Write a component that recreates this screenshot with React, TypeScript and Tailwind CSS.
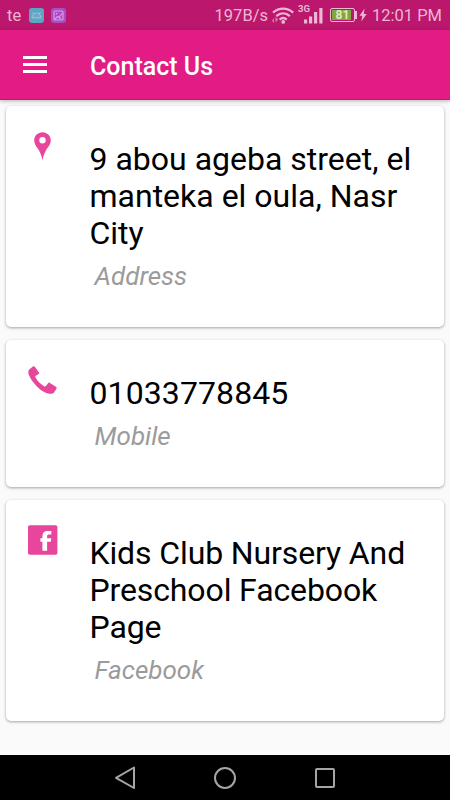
import type { ReactNode } from "react";

type Contact = {
  label: string;
  value: string;
  icon: ReactNode;
  height: string;
  tracking?: string;
};

const PinIcon = () => (
  <svg width="30" height="30" viewBox="0 0 30 30" className="text-[#e8469d]">
    <path
      fill="currentColor"
      fillRule="evenodd"
      d="M14.500 1.200c-4.700 0-8.300 3.600-8.300 8.200 0 3.400 2 5.700 3.800 8.400 2.100 3.200 3.500 6.700 4.500 11.400 1-4.700 2.300-8.200 4.400-11.400 1.800-2.700 3.900-5 3.900-8.400 0-4.600-3.700-8.200-8.300-8.200zm0 4.900a3.200 3.200 0 1 1 0 6.400 3.200 3.200 0 0 1 0-6.400z"
    />
  </svg>
);

const PhoneIcon = () => (
  <svg width="30" height="30" viewBox="0 0 30 30" className="text-[#e8469d]">
    <path
      fill="currentColor"
      d="M1.500 4.200 4.600 1.700c.9-.7 1.800-.6 2.400.3l3.800 5.200c.5.700.4 1.300-.2 1.800L7.700 10.800c-.5.400-.6.900-.3 1.500 1.900 3.600 5.400 7.100 9 9.100.6.300 1.100.2 1.500-.3l2.200-2.900c.5-.700 1.100-.8 1.800-.3l5.900 3.900c.9.600 1.100 1.400.5 2.300l-2.300 3.300c-.8 1.200-2.200 1.600-4.200 1.400-4.500-.5-9.400-3.800-13.300-7.900C4.400 16.600 1 11.700.4 8 .1 6.400.5 5.100 1.500 4.200z"
    />
  </svg>
);

const FacebookIcon = () => (
  <svg width="30" height="30" viewBox="0 0 30 30">
    <rect y=".2" width="29.400" height="29.600" rx="1.800" fill="#e8469d" />
    <path
      fill="#fff"
      d="M14.400 25.800V16.700h-2v-3.500h2v-2c0-3.400 1.800-5.300 5.200-5.300h3.700v3.700h-2.300c-1.400 0-1.900.6-1.900 1.800v1.800h4.200l-.5 3.500h-3.700v9.100z"
    />
  </svg>
);

const CONTACTS: Contact[] = [
  {
    label: "Address",
    value: "9 abou ageba street, el manteka el oula, Nasr City",
    icon: <PinIcon />,
    height: "h-[221px]",
  },
  {
    label: "Mobile",
    value: "01033778845",
    icon: <PhoneIcon />,
    height: "h-[147px]",
    tracking: "tracking-[0.1px]",
  },
  {
    label: "Facebook",
    value: "Kids Club Nursery And Preschool Facebook Page",
    icon: <FacebookIcon />,
    height: "h-[221px]",
    tracking: "tracking-[-0.12px]",
  },
];

const StatusBar = () => (
  <div className="h-[30px] shrink-0 flex items-center bg-[#bb176d] pl-[7px] pr-2 text-[#eeb6d5] text-[16.500px] leading-none">
    <span className="mt-[2px]">te</span>
    <svg width="15" height="15" viewBox="0 0 15 15" className="ml-[8px]">
      <rect width="15" height="15" rx="3" fill="#5da5c3" />
      <path
        d="M3 9.800c.2-3.200 2-4.600 4.500-4.600s4.300 1.400 4.500 4.600zM4.600 5.800 3.600 4M10.400 5.800l1-1.800"
        fill="none"
        stroke="#a9c4dc"
        strokeWidth="1"
      />
      <circle cx="5.700" cy="7.900" r=".6" fill="#a9c4dc" />
      <circle cx="9.300" cy="7.900" r=".6" fill="#a9c4dc" />
    </svg>
    <svg width="15" height="15" viewBox="0 0 15 15" className="ml-[7px]">
      <rect width="15" height="15" rx="3" fill="#ab4bc6" />
      <g fill="none" stroke="#d9a0de" strokeWidth="1.100">
        <rect x="3" y="3" width="9" height="9" rx="1" />
        <path d="m3.500 11.500 3-3 1.500 1 3.500-4.500M8 9.500l2 1.500" />
      </g>
      <circle cx="5.600" cy="5.600" r=".9" fill="#d9a0de" />
    </svg>

    <span className="ml-auto mt-[2px]">197B/s</span>
    <svg width="22" height="17" viewBox="0 0 22 17" className="ml-[4px]">
      <g fill="none" stroke="currentColor" strokeWidth="2.200">
        <path d="M1 5.600c6-5.300 14.200-5.300 20.200 0" />
        <path d="M4.300 9.200c4.200-3.700 9.400-3.700 13.600 0" />
        <path d="M7.600 12.600c2.300-2.100 4.800-2.100 7.100 0" />
      </g>
      <circle cx="11.200" cy="14.900" r="1.900" fill="currentColor" />
      <path d="M0 13.800 2 11v5zM3.500 9.500v6l2.700-3z" fill="currentColor" opacity=".6" />
    </svg>
    <div className="relative ml-[4px] h-[17px] w-[25px]">
      <span className="absolute left-0 -top-[3px] text-[9.500px] font-bold leading-[10px]">3G</span>
      <svg width="25" height="17" viewBox="0 0 25 17" fill="currentColor">
        <rect x="6" y="12.500" width="3.200" height="4" />
        <rect x="11" y="9.500" width="3.200" height="7" />
        <rect x="16" y="5" width="3.200" height="11.500" />
        <rect x="21.300" y="1" width="3.200" height="15.500" />
      </svg>
    </div>
    <div className="ml-[7px] flex items-center">
      <div className="h-[14px] w-[25px] rounded-[2px] border-[1.500px] border-[#eeb6d5] p-px flex">
        <span className="w-[19px] bg-[#7fa83a] text-center text-[12px] font-bold leading-[11px] text-[#e9e3c9] pl-[2px]">
          81
        </span>
      </div>
      <span className="h-[8px] w-[2px] bg-[#eeb6d5]" />
    </div>
    <svg width="8" height="14" viewBox="0 0 8 14" className="ml-[2px]">
      <path d="M5.500.5.600 7.800h2.700L2.300 13.500l5.400-7.600H4.800z" fill="currentColor" />
    </svg>
    <span className="ml-[5px] mt-[2px]">12:01 PM</span>
  </div>
);

const AppBar = () => (
  <header className="relative z-10 h-[70px] shrink-0 flex items-center bg-[#e21b85] border-b border-[#c71573] pl-[23px] shadow-[0_1px_4px_rgba(0,0,0,0.3)]">
    <button type="button" aria-label="Menu" className="flex w-6 flex-col gap-[4px] -mt-px">
      <span className="h-[3px] bg-white" />
      <span className="h-[3px] bg-white" />
      <span className="h-[3px] bg-white" />
    </button>
    <h1 className="ml-[43px] text-[25px] font-medium leading-none text-white mt-[3px]">Contact Us</h1>
  </header>
);

const ContactCard = ({ label, value, icon, height, tracking = "" }: Contact) => (
  <section
    className={`${height} flex rounded-[5px] bg-white shadow-[0_1px_3px_rgba(0,0,0,0.35)]`}
  >
    <div className="w-[83.500px] shrink-0 pl-[22px] pt-[25px]">{icon}</div>
    <div className="w-[335px] pt-[35px]">
      <p className={`text-[32px] leading-[37px] text-black ${tracking}`}>{value}</p>
      <p className="mt-[9px] pl-[5px] text-[26px] italic leading-[30px] text-[#9b9b9b]">{label}</p>
    </div>
  </section>
);

const NavBar = () => (
  <nav className="h-[45px] shrink-0 flex items-center justify-center gap-[76px] bg-black">
    <svg width="24" height="24" viewBox="0 0 24 24" fill="none" stroke="#a5a5a5" strokeWidth="2">
      <path d="M21 1.500v20.500L3 11.800z" strokeLinejoin="round" />
    </svg>
    <svg width="24" height="24" viewBox="0 0 24 24" fill="none" stroke="#a5a5a5" strokeWidth="2">
      <circle cx="12" cy="12" r="10" />
    </svg>
    <svg width="24" height="24" viewBox="0 0 24 24" fill="none" stroke="#a5a5a5" strokeWidth="2">
      <rect x="3" y="3" width="18" height="18" rx="1" />
    </svg>
  </nav>
);

export default function App() {
  return (
    <div className="flex h-[800px] w-[450px] flex-col overflow-hidden bg-[#fafafa] font-['Roboto',sans-serif]">
      <StatusBar />
      <AppBar />
      <main className="flex flex-1 flex-col gap-[13px] px-[6px] pt-[6px]">
        {CONTACTS.map((contact) => (
          <ContactCard key={contact.label} {...contact} />
        ))}
      </main>
      <NavBar />
    </div>
  );
}
